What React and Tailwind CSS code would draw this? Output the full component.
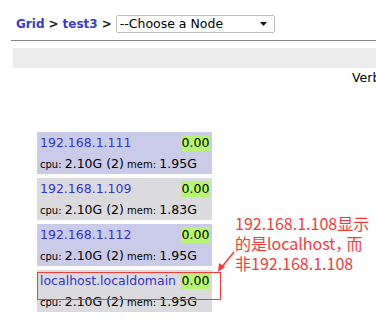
import React from "react";

const nodes = [
  { name: "192.168.1.111", load: "0.00", cpu: "2.10G (2)", mem: "1.95G", bg: "bg-[#c9cbe9]" },
  { name: "192.168.1.109", load: "0.00", cpu: "2.10G (2)", mem: "1.83G", bg: "bg-[#dbdbdf]" },
  { name: "192.168.1.112", load: "0.00", cpu: "2.10G (2)", mem: "1.95G", bg: "bg-[#c9cbe9]" },
  { name: "localhost.localdomain", load: "0.00", cpu: "2.10G (2)", mem: "1.95G", bg: "bg-[#dbdbdf]" },
];

function NodeCard({ node }) {
  return (
    <div className={`${node.bg} h-[42px] pl-[3px] pr-[2px] pt-[3px]`}>
      <div className="flex items-center justify-between h-[16px]">
        <span className="text-[12.5px] text-[#3434cc]">{node.name}</span>
        <span className="bg-[#b6f56f] h-[16px] w-[29px] flex items-center justify-center text-[12.5px] text-black">
          {node.load}
        </span>
      </div>
      <div className="mt-[3px] text-black whitespace-nowrap leading-[18px]">
        <span className="text-[10px]">cpu: </span>
        <span className="text-[12.5px]">{node.cpu}</span>
        <span className="text-[10px]"> mem: </span>
        <span className="text-[12.5px]">{node.mem}</span>
      </div>
    </div>
  );
}

export default function App() {
  return (
    <div className="relative w-[376px] h-[328px] overflow-hidden bg-white font-['DejaVu_Sans','Verdana',sans-serif]">
      <div className="flex items-center pl-[16px] pt-[15px] h-[33px]">
        <span className="text-[12px] font-bold text-[#3a3ad0]">Grid</span>
        <span className="text-[12px] font-bold text-[#222] mx-[4px]">&gt;</span>
        <span className="text-[12px] font-bold text-[#3a3ad0]">test3</span>
        <span className="text-[12px] font-bold text-[#222] mx-[4px]">&gt;</span>
        <div className="w-[159px] h-[18px] border border-[#bdbdbd] rounded-[2px] flex items-center justify-between pl-[3px] pr-[7px]">
          <span className="text-[12.5px] text-black">--Choose a Node</span>
          <svg width="7" height="4" viewBox="0 0 7 4">
            <path d="M0 0 L7 0 L3.5 4 Z" fill="#111" />
          </svg>
        </div>
      </div>
      <div className="ml-[11px] mt-[7px] border-t border-[#888]" />
      <div className="ml-[13px] mt-[7px] h-[20px] bg-[#ececec]" />
      <div className="pl-[352px] mt-[2px] whitespace-nowrap text-[12.5px] text-black leading-[16px]">Verbose</div>
      <div className="ml-[37px] mt-[46px] w-[175px] flex flex-col gap-[4px]">
        {nodes.map((n) => (
          <NodeCard key={n.name} node={n} />
        ))}
      </div>

      <div className="absolute left-[37px] top-[272px] w-[184px] h-[28px] border border-[#f43b3b]" />
      <svg className="absolute left-[214px] top-[248px]" width="24" height="28" viewBox="0 0 24 28">
        <line x1="20" y1="4" x2="7" y2="20" stroke="#f43b3b" strokeWidth="1.5" />
        <path d="M4 24 L5 15 L11 19 Z" fill="#f43b3b" />
      </svg>
      <div className="absolute left-[235px] top-[213px] text-[16px] leading-[20px] text-[#f43b3b] font-['Noto_Sans_CJK_SC',sans-serif] whitespace-nowrap">
        <div>192.168.1.108显示</div>
        <div>
          的是localhost<span className="tracking-[-5px]">，</span>而
        </div>
        <div>非192.168.1.108</div>
      </div>
    </div>
  );
}
